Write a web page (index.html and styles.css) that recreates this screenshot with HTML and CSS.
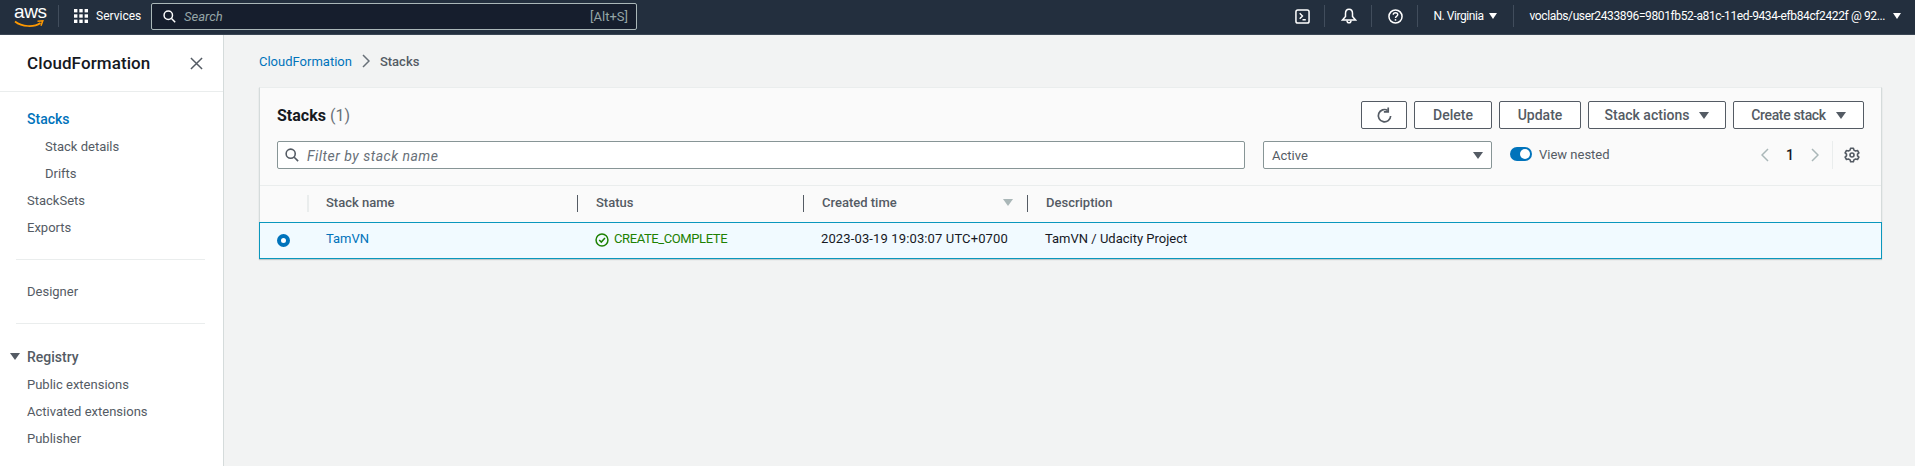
FILE: index.html
```html
<!DOCTYPE html>
<html lang="en">
<head>
    <meta charset="UTF-8">
    <title>Stacks - CloudFormation</title>
    <link rel="stylesheet" href="styles.css">
</head>
<body>

    <header class="topbar">
        <div class="logo">
            <span class="logo-text">aws</span>
            <svg class="logo-smile" viewBox="0 0 30 9" width="30" height="9">
                <path d="M1 1.5C8 7 20 7.5 26.5 3" fill="none" stroke="#ff9900" stroke-width="1.7"/>
                <path d="M23.5 1.2 L28.8 .8 L27 5.8" fill="none" stroke="#ff9900" stroke-width="1.5"/>
            </svg>
        </div>
        <span class="top-sep sep-logo"></span>
        <svg class="grid-icon" viewBox="0 0 14 14" width="14" height="14">
            <g fill="#ffffff">
                <rect x="0" y="0" width="3.4" height="3.4"/><rect x="5.3" y="0" width="3.4" height="3.4"/><rect x="10.6" y="0" width="3.4" height="3.4"/>
                <rect x="0" y="5.3" width="3.4" height="3.4"/><rect x="5.3" y="5.3" width="3.4" height="3.4"/><rect x="10.6" y="5.3" width="3.4" height="3.4"/>
                <rect x="0" y="10.6" width="3.4" height="3.4"/><rect x="5.3" y="10.6" width="3.4" height="3.4"/><rect x="10.6" y="10.6" width="3.4" height="3.4"/>
            </g>
        </svg>
        <span class="services">Services</span>
        <div class="top-search">
            <svg viewBox="0 0 16 16" width="13" height="13">
                <circle cx="6.5" cy="6.5" r="5.2" fill="none" stroke="#ffffff" stroke-width="1.8"/>
                <path d="M10.5 10.5 L15 15" stroke="#ffffff" stroke-width="1.8"/>
            </svg>
            <span class="top-search-text">Search</span>
            <span class="top-search-key">[Alt+S]</span>
        </div>
        <div class="top-right">
            <svg class="top-icon" viewBox="0 0 16 16" width="15" height="15">
                <rect x="1" y="1" width="14" height="14" rx="2" fill="none" stroke="#ffffff" stroke-width="1.6"/>
                <path d="M5 4.5 L8 7.5 L5 10.5 M8 11.5 H11.5" fill="none" stroke="#ffffff" stroke-width="1.5"/>
            </svg>
            <span class="top-sep"></span>
            <svg class="top-icon" viewBox="0 0 16 16" width="16" height="16">
                <path d="M1.5 12 L4.5 8.5 V5.5 C4.5 3 6 1.2 8 1.2 C10 1.2 11.5 3 11.5 5.5 V8.5 L14.5 12 Z" fill="none" stroke="#ffffff" stroke-width="1.5"/>
                <path d="M6 12.5 C6 15.6 10 15.6 10 12.5" fill="none" stroke="#ffffff" stroke-width="1.5"/>
            </svg>
            <span class="top-sep"></span>
            <svg class="top-icon" viewBox="0 0 16 16" width="15" height="15">
                <circle cx="8" cy="8" r="7" fill="none" stroke="#ffffff" stroke-width="1.6"/>
                <path d="M5.6 6.2 C5.6 4.8 6.7 4 8 4 C9.4 4 10.4 4.9 10.4 6 C10.4 7.6 8 7.6 8 9.6" fill="none" stroke="#ffffff" stroke-width="1.5"/>
                <rect x="7.2" y="10.8" width="1.6" height="1.6" fill="#ffffff"/>
            </svg>
            <span class="top-sep"></span>
            <span class="region">N. Virginia</span>
            <span class="tri-white tri-region"></span>
            <span class="top-sep"></span>
            <span class="account">voclabs/user2433896=9801fb52-a81c-11ed-9434-efb84cf2422f @ 92...</span>
            <span class="tri-white tri-account"></span>
        </div>
    </header>

    <div class="page">
        <aside class="nav">
            <div class="nav-head">
                <span class="nav-title">CloudFormation</span>
                <svg viewBox="0 0 14 14" width="13" height="13">
                    <path d="M1 1 L13 13 M13 1 L1 13" stroke="#545b64" stroke-width="1.6"/>
                </svg>
            </div>
            <ul class="nav-list">
                <li class="active">Stacks</li>
                <li class="sub">Stack details</li>
                <li class="sub">Drifts</li>
                <li>StackSets</li>
                <li>Exports</li>
            </ul>
            <hr class="nav-rule">
            <ul class="nav-list">
                <li>Designer</li>
            </ul>
            <hr class="nav-rule">
            <div class="nav-group"><span class="tri-dark"></span>Registry</div>
            <ul class="nav-list nav-list-group">
                <li>Public extensions</li>
                <li>Activated extensions</li>
                <li>Publisher</li>
            </ul>
        </aside>

        <main class="content">
            <div class="crumbs">
                <a class="link">CloudFormation</a>
                <svg viewBox="0 0 8 14" width="8" height="14">
                    <path d="M1 1 L7 7 L1 13" fill="none" stroke="#687078" stroke-width="1.5"/>
                </svg>
                <span>Stacks</span>
            </div>

            <section class="card">
                <div class="card-top">
                    <div class="title-row">
                        <h1>Stacks <span class="count">(1)</span></h1>
                        <div class="actions">
                            <button class="btn btn-icon">
                                <svg viewBox="0 0 16 16" width="17" height="17">
                                    <path d="M13.8 8.5 A5.8 5.8 0 1 1 11 3.2" fill="none" stroke="#545b64" stroke-width="1.6"/>
                                    <path d="M11.5 .5 V4.6 H7.4" fill="none" stroke="#545b64" stroke-width="1.6"/>
                                </svg>
                            </button>
                            <button class="btn btn-delete">Delete</button>
                            <button class="btn btn-update">Update</button>
                            <button class="btn btn-actions">Stack actions<span class="tri-dark"></span></button>
                            <button class="btn btn-create">Create stack<span class="tri-dark"></span></button>
                        </div>
                    </div>
                    <div class="filter-row">
                        <div class="filter">
                            <svg viewBox="0 0 16 16" width="14" height="14">
                                <circle cx="6.5" cy="6.5" r="5.2" fill="none" stroke="#545b64" stroke-width="1.8"/>
                                <path d="M10.5 10.5 L15 15" stroke="#545b64" stroke-width="1.8"/>
                            </svg>
                            <span class="filter-text">Filter by stack name</span>
                        </div>
                        <div class="select">Active<span class="tri-dark"></span></div>
                        <div class="toggle"><span class="toggle-knob"></span></div>
                        <span class="toggle-label">View nested</span>
                        <div class="pager">
                            <svg viewBox="0 0 8 14" width="8" height="14">
                                <path d="M7 1 L1 7 L7 13" fill="none" stroke="#aab7b8" stroke-width="1.5"/>
                            </svg>
                            <span class="page-num">1</span>
                            <svg viewBox="0 0 8 14" width="8" height="14">
                                <path d="M1 1 L7 7 L1 13" fill="none" stroke="#aab7b8" stroke-width="1.5"/>
                            </svg>
                        </div>
                        <div class="settings">
                            <svg viewBox="0 0 16 16" width="16" height="16">
                                <path d="M6.6 1.2 H9.4 L9.9 3.1 L11.6 4 L13.5 3.5 L14.9 5.9 L13.5 7.2 V8.8 L14.9 10.1 L13.5 12.5 L11.6 12 L9.9 12.9 L9.4 14.8 H6.6 L6.1 12.9 L4.4 12 L2.5 12.5 L1.1 10.1 L2.5 8.8 V7.2 L1.1 5.9 L2.5 3.5 L4.4 4 L6.1 3.1 Z" fill="none" stroke="#545b64" stroke-width="1.6" stroke-linejoin="round"/>
                                <circle cx="8" cy="8" r="2" fill="none" stroke="#545b64" stroke-width="1.6"/>
                            </svg>
                        </div>
                    </div>
                </div>

                <div class="table-head">
                    <div class="th"><div class="th-in th-faint"></div></div>
                    <div class="th"><div class="th-in th-faint">Stack name</div></div>
                    <div class="th"><div class="th-in">Status</div></div>
                    <div class="th"><div class="th-in">Created time<span class="tri-sort"></span></div></div>
                    <div class="th"><div class="th-in">Description</div></div>
                </div>
                <div class="table-row">
                    <div class="td td-radio"><span class="radio"></span></div>
                    <div class="td td-name"><a class="link">TamVN</a></div>
                    <div class="td status">
                        <svg viewBox="0 0 16 16" width="14" height="14">
                            <circle cx="8" cy="8" r="6.8" fill="none" stroke="#1d8102" stroke-width="1.7"/>
                            <path d="M4.8 8 L7.2 10.4 L11.4 5.6" fill="none" stroke="#1d8102" stroke-width="1.7"/>
                        </svg>
                        CREATE_COMPLETE
                    </div>
                    <div class="td td-time">2023-03-19 19:03:07 UTC+0700</div>
                    <div class="td">TamVN / Udacity Project</div>
                </div>
            </section>
        </main>
    </div>

</body>
</html>
```

FILE: styles.css
```css
* {
    box-sizing: border-box;
}

html, body {
    height: 100%;
}

body {
    font-family: 'Roboto', sans-serif;
    font-size: 14px;
    color: #16191f;
    background-color: #f2f3f3;
    margin: 0;
    overflow: hidden;
}

ul {
    list-style: none;
    margin: 0;
    padding: 0;
}

.link {
    color: #0073bb;
}

/* top bar */

.topbar {
    display: flex;
    align-items: center;
    height: 35px;
    padding: 0 0 2px 14px;
    background-color: #232f3e;
    border-bottom: 1px solid #3a4654;
    color: #ffffff;
    font-size: 12px;
}

.logo {
    display: flex;
    flex-direction: column;
    width: 30px;
    height: 24px;
    margin-top: 1px;
}

.logo-text {
    font-family: 'Liberation Sans', sans-serif;
    font-size: 19px;
    line-height: 14px;
    letter-spacing: -0.4px;
    text-align: center;
}

.logo-smile {
    margin-top: 1px;
}

.top-sep {
    width: 1px;
    height: 22px;
    background-color: #414d5c;
}

.sep-logo {
    margin: 0 15px 0 14px;
}

.services {
    margin-left: 8px;
    width: 55px;
    font-size: 12px;
}

.top-search {
    display: flex;
    align-items: center;
    width: 486px;
    height: 27px;
    padding: 0 8px 0 11px;
    background-color: #161e2d;
    border: 1px solid #aab7b8;
    border-radius: 2px;
    color: #95a5a6;
}

.top-search-text {
    margin-left: 8px;
    font-style: italic;
    font-size: 13px;
}

.top-search-key {
    margin-left: auto;
    font-size: 13px;
}

.top-right {
    display: flex;
    align-items: center;
    margin-left: auto;
    padding-right: 14px;
}

.top-right .top-sep {
    margin: 0 16px 0 14px;
}

.top-right .top-icon {
    flex: none;
}

.region {
    letter-spacing: -0.45px;
}

.account {
    white-space: nowrap;
    letter-spacing: -0.38px;
}

.tri-white {
    width: 0;
    height: 0;
    margin-left: 5px;
    border-left: 4px solid transparent;
    border-right: 4px solid transparent;
    border-top: 6px solid #ffffff;
}

.tri-region {
    margin-right: 2px;
}

.tri-account {
    margin-left: 8px;
}

/* left nav */

.page {
    display: flex;
    height: calc(100% - 35px);
}

.nav {
    flex: none;
    width: 224px;
    background-color: #ffffff;
    border-right: 1px solid #d5dbdb;
    color: #545b64;
    font-size: 13px;
}

.nav-head {
    display: flex;
    align-items: center;
    justify-content: space-between;
    height: 57px;
    padding: 0 20px 0 27px;
    border-bottom: 1px solid #eaeded;
}

.nav-title {
    color: #16191f;
    font-size: 17px;
    font-weight: 500;
    letter-spacing: 0.1px;
}

.nav-list li {
    height: 27px;
    line-height: 27px;
    padding-left: 27px;
}

.nav-list li.active {
    color: #0073bb;
    font-size: 14px;
    font-weight: 500;
}

.nav-list li.sub {
    padding-left: 45px;
}

.nav-head + .nav-list {
    margin-top: 14px;
}

.nav-list-group {
    margin-top: 1px;
}

.nav-rule {
    height: 1px;
    margin: 18px 18px 18px 16px;
    border: 0;
    background-color: #eaeded;
}

.nav-group {
    display: flex;
    align-items: center;
    height: 27px;
    padding-left: 10px;
    margin-top: 19px;
    font-size: 14px;
    font-weight: 500;
}

.nav-group .tri-dark {
    margin: 0 7px 0 0;
}

.tri-dark {
    display: inline-block;
    width: 0;
    height: 0;
    margin-left: 10px;
    border-left: 5px solid transparent;
    border-right: 5px solid transparent;
    border-top: 7px solid #545b64;
}

/* content */

.content {
    flex: 1;
    padding: 0 33px 0 35px;
}

.crumbs {
    display: flex;
    align-items: center;
    gap: 10px;
    height: 52px;
    color: #545b64;
    font-size: 13px;
    font-weight: 500;
}

.crumbs .link {
    font-weight: 400;
}

.card {
    background-color: #fafafa;
    border-left: 1px solid #d5dbdb;
    border-right: 1px solid #d5dbdb;
    border-top: 1px solid #eaeded;
    box-shadow: 0 1px 1px rgba(0, 28, 36, 0.2);
}

.card-top {
    height: 98px;
    padding: 13px 17px 0 17px;
    border-bottom: 1px solid #eaeded;
}

.title-row {
    display: flex;
    align-items: center;
    justify-content: space-between;
    height: 28px;
}

h1 {
    margin: 0;
    font-size: 16px;
    font-weight: 700;
}

.count {
    color: #687078;
    font-weight: 400;
}

.actions {
    display: flex;
    gap: 7px;
}

.btn {
    display: flex;
    align-items: center;
    justify-content: center;
    height: 28px;
    padding: 0;
    background-color: #ffffff;
    border: 1px solid #545b64;
    border-radius: 2px;
    color: #545b64;
    font-family: inherit;
    font-size: 14px;
    font-weight: 500;
}

.btn-icon { width: 46px; }
.btn-delete { width: 78px; }
.btn-update { width: 82px; }
.btn-actions { width: 138px; }

.btn-create {
    width: 131px;
    letter-spacing: -0.35px;
}

.filter-row {
    display: flex;
    align-items: center;
    height: 28px;
    margin-top: 12px;
}

.filter {
    display: flex;
    align-items: center;
    gap: 8px;
    width: 968px;
    height: 28px;
    padding-left: 7px;
    background-color: #ffffff;
    border: 1px solid #879596;
    border-radius: 2px;
    color: #687078;
    font-style: italic;
}

.filter-text {
    letter-spacing: 0.5px;
    padding-top: 2px;
}

.select {
    display: flex;
    align-items: center;
    justify-content: space-between;
    width: 229px;
    height: 28px;
    margin-left: 18px;
    padding: 0 8px;
    background-color: #ffffff;
    border: 1px solid #879596;
    border-radius: 2px;
    color: #545b64;
    font-size: 13px;
}

.toggle {
    display: flex;
    justify-content: flex-end;
    align-items: center;
    width: 22px;
    height: 14px;
    margin-left: 18px;
    margin-top: -2px;
    padding-right: 2px;
    background-color: #0073bb;
    border-radius: 7px;
}

.toggle-knob {
    width: 10px;
    height: 10px;
    background-color: #ffffff;
    border-radius: 50%;
}

.toggle-label {
    margin-left: 7px;
    margin-top: -2px;
    color: #545b64;
    font-size: 13px;
}

.pager {
    display: flex;
    align-items: center;
    gap: 17px;
    margin-left: auto;
    padding-right: 13px;
    height: 28px;
    border-right: 1px solid #eaeded;
}

.page-num {
    font-weight: 500;
}

.settings {
    display: flex;
    align-items: center;
    margin-left: 11px;
    margin-right: 4px;
}

/* table */

.table-head,
.table-row {
    display: grid;
    grid-template-columns: 48px 269px 226px 224px 1fr;
}

.table-head {
    height: 36px;
    align-items: center;
    color: #545b64;
    font-weight: 500;
    font-size: 13px;
    padding-bottom: 1px;
}

.th-in {
    display: flex;
    align-items: center;
    height: 17px;
    padding-left: 18px;
    padding-right: 14px;
    padding-bottom: 3px;
    border-left: 1px solid #545b64;
}

.th-faint {
    border-left-color: #eaeded;
    padding-left: 17px;
}

.th:first-child .th-in {
    border-left: 0;
}

.th:first-child {
    border-right: 1px solid #eaeded;
    height: 17px;
}

.tri-sort {
    width: 0;
    height: 0;
    margin-left: auto;
    border-left: 5px solid transparent;
    border-right: 5px solid transparent;
    border-top: 7px solid #aab7b8;
}

.table-row {
    height: 37px;
    margin: 0 -1px;
    background-color: #f1faff;
    border: 1px solid #0a97bd;
    align-items: center;
    font-size: 13px;
}

.td {
    padding-left: 18px;
    padding-bottom: 5px;
}

.td-radio {
    padding-left: 17px;
    padding-bottom: 0;
}

.td-name {
    padding-left: 18px;
}

.td-time {
    letter-spacing: 0.13px;
}

.radio {
    display: block;
    width: 13px;
    height: 13px;
    background-color: #ffffff;
    border: 4px solid #0073bb;
    border-radius: 50%;
}

.status {
    display: flex;
    align-items: center;
    gap: 5px;
    color: #1d8102;
    letter-spacing: -0.4px;
}

.status svg {
    margin-top: 3px;
}
```
